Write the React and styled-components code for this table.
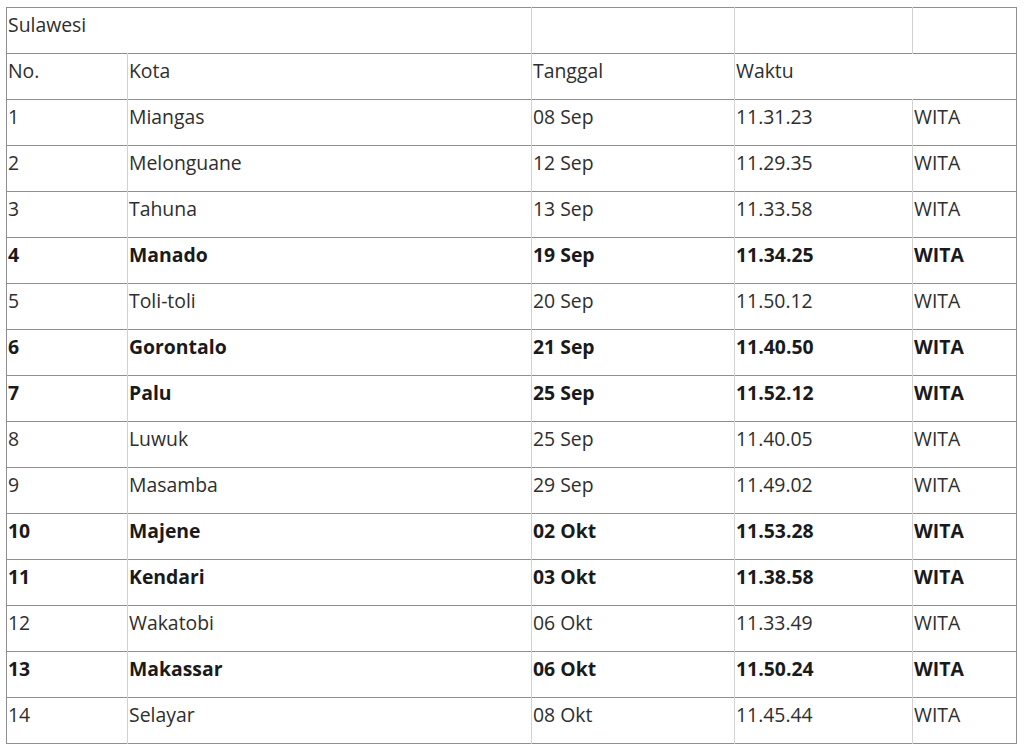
import React from 'react';
import styled, { createGlobalStyle } from 'styled-components';

const GlobalStyle = createGlobalStyle`
  body {
    margin: 0;
    background: #ffffff;
    font-family: "Open Sans", "Noto Sans", sans-serif;
  }
`;

const Page = styled.div`
  padding: 7px 0 0 6px;
`;

const Table = styled.table`
  border-collapse: collapse;
  table-layout: fixed;
  width: 1010px;
  border-left: 1px solid #8f8f8f;
  border-right: 1px solid #8f8f8f;
  border-bottom: 1px solid #8f8f8f;
  color: #2a2a2a;
  font-size: 19.4px;
`;

const Row = styled.tr`
  height: 46px;
  border-top: 1px solid #8f8f8f;
  font-weight: ${(p) => (p.$bold ? 700 : 400)};
  color: ${(p) => (p.$bold ? '#1a1a1a' : '#2e2e2e')};
`;

const Cell = styled.td`
  vertical-align: top;
  padding: 4px 2px 0 1px;
  line-height: 26px;
  border-left: 1px solid #d2d2d2;
  white-space: nowrap;
  &:first-child {
    border-left: none;
  }
`;

const rows = [
  ['1', 'Miangas', '08 Sep', '11.31.23'],
  ['2', 'Melonguane', '12 Sep', '11.29.35'],
  ['3', 'Tahuna', '13 Sep', '11.33.58'],
  ['4', 'Manado', '19 Sep', '11.34.25', true],
  ['5', 'Toli-toli', '20 Sep', '11.50.12'],
  ['6', 'Gorontalo', '21 Sep', '11.40.50', true],
  ['7', 'Palu', '25 Sep', '11.52.12', true],
  ['8', 'Luwuk', '25 Sep', '11.40.05'],
  ['9', 'Masamba', '29 Sep', '11.49.02'],
  ['10', 'Majene', '02 Okt', '11.53.28', true],
  ['11', 'Kendari', '03 Okt', '11.38.58', true],
  ['12', 'Wakatobi', '06 Okt', '11.33.49'],
  ['13', 'Makassar', '06 Okt', '11.50.24', true],
  ['14', 'Selayar', '08 Okt', '11.45.44'],
];

const App = () => (
  <Page>
    <GlobalStyle />
    <Table>
      <colgroup>
        <col style={{ width: 121 }} />
        <col style={{ width: 404 }} />
        <col style={{ width: 203 }} />
        <col style={{ width: 178 }} />
        <col style={{ width: 104 }} />
      </colgroup>
      <tbody>
        <Row>
          <Cell colSpan={2}>Sulawesi</Cell>
          <Cell />
          <Cell />
          <Cell />
        </Row>
        <Row>
          <Cell>No.</Cell>
          <Cell>Kota</Cell>
          <Cell>Tanggal</Cell>
          <Cell colSpan={2}>Waktu</Cell>
        </Row>
        {rows.map(([no, kota, tgl, waktu, bold]) => (
          <Row key={no} $bold={bold}>
            <Cell>{no}</Cell>
            <Cell>{kota}</Cell>
            <Cell>{tgl}</Cell>
            <Cell>{waktu}</Cell>
            <Cell>WITA</Cell>
          </Row>
        ))}
      </tbody>
    </Table>
  </Page>
);

export default App;
